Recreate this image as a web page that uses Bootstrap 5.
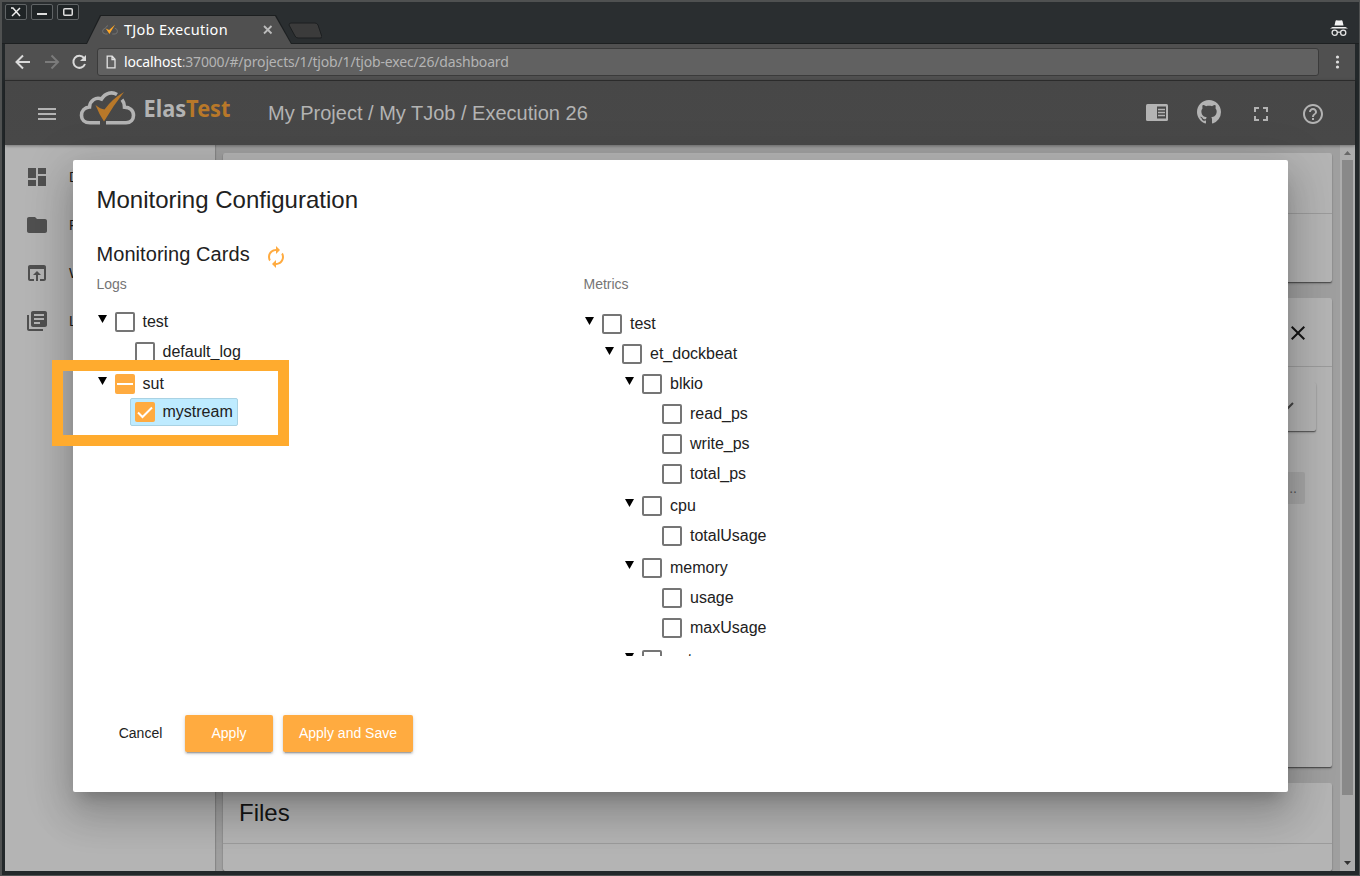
<!DOCTYPE html>
<html lang="en">
<head>
<meta charset="utf-8">
<title>TJob Execution</title>
<link href="https://cdn.jsdelivr.net/npm/bootstrap@5.3.0/dist/css/bootstrap.min.css" rel="stylesheet">
<style>
body{width:1360px;height:876px;background:#4f4f4f;font-family:"Liberation Sans",Arial,sans-serif;color:#212121;line-height:1.2}
svg{display:block;flex:none}
.desk{width:1360px;height:876px;padding:2px 1px 1px 2px;background:#4f5151}
.win{background:#23282a;border-radius:3px 3px 0 0}
.titlebar{height:42px;background:#2a2e30;padding-left:3px;border-bottom:1px solid #1d2021}
.winbtn{width:22px;height:16px;border:1px solid #606466;border-radius:2px;margin:2px 4px 0 0;background:#1f2426}
.wintab{width:206px;height:29px;margin:13px 0 0 3px;background:#1c1f20;clip-path:polygon(0 100%,14px 0,190px 0,100% 100%)}
.wintab-in{width:100%;height:28px;margin-top:1px;background:#505050;clip-path:polygon(1px 100%,15px 0,189px 0,205px 100%);padding-left:16px}
.ubu{font-family:"Noto Sans","Open Sans",sans-serif}
.tabtext{font-size:14.5px;color:#fff;width:124px;letter-spacing:.3px}
.newtab{width:34px;height:17px;margin:20px 0 0 -4px}
.viewport-frame{margin:0 4px 4px 3px}
.toolbar{height:36px;background:#505050}
.omni{height:28px;background:#616161;border:1px solid #3b3b3b;border-radius:3px;width:1222px;font-size:14px;color:#b4b4b4;letter-spacing:-.17px}
.apphead{height:65px;background:linear-gradient(#474747,#484848);border-top:1px solid #2b2b2b;color:#b3b3b3;z-index:2;box-shadow:0 1px 3px rgba(0,0,0,.35)}
.apptitle{font-size:20px}
.side{width:210px;background:#b4b4b4;padding-top:8px;font-size:14px;color:#1b1b1b;box-shadow:1px 0 1px rgba(0,0,0,.15)}
.side-item{height:48px;padding-left:20px;gap:20px}
.mainarea{background:#9f9f9f;padding:8px 8px 0 8px;gap:16px;overflow:hidden}
.panel{background:#b4b4b4;border-radius:2px;box-shadow:0 1px 1px rgba(0,0,0,.45),0 2px 2px rgba(0,0,0,.15)}
.panel-top{border-bottom:1px solid #9b9b9b}
.sbar{width:15px;background:#adadad;padding:0 2px}
.thumb{width:11px;height:635px;background:#898989}
.dlg{left:73px;top:160px;width:1215px;height:632px;z-index:5;background:#fff;border-radius:2px;padding:24px 24px 24px 23.5px;box-shadow:0 11px 15px -7px rgba(0,0,0,.2),0 24px 38px 3px rgba(0,0,0,.14),0 9px 46px 8px rgba(0,0,0,.12)}
.dlg h2{font-size:24px;font-weight:400;line-height:32px;margin:0}
.dlg h3{font-size:20px;font-weight:400;line-height:24px;margin:0;letter-spacing:.06px}
.tree{font-size:16px;line-height:20px;padding-left:.5px}
.colhead{font-size:14px;color:#757575;line-height:17px}
.node{height:30px;display:flex;align-items:center}
.caret{width:18px;height:20px;flex:none}
.caret::before{content:"";display:block;width:9px;height:8px;margin:3px 0 0 1px;background:#000;clip-path:polygon(0 0,100% 0,50% 100%)}
.tick{width:20px;height:20px;border:2px solid #757575;border-radius:2px;margin-right:7.5px;flex:none}
.metrics .tick{margin-right:8px}
.tick.on{background:#ffab40;border:0}
.kids{margin-left:20px}
.kids+.node{margin-top:2px}
.leaf{padding-left:18px}
.picked{width:108px;height:28px;margin:-1px 0 0 13px;padding-left:4px;background:#beebff;border:1px solid #a9d2e3;border-radius:2px}
.act{height:37px;font-size:14px;border-radius:2px;color:#fff;background:#ffab40;border:0;padding:0;box-shadow:0 3px 1px -2px rgba(0,0,0,.2),0 2px 2px rgba(0,0,0,.14),0 1px 5px rgba(0,0,0,.12)}
.act.flat{background:none;box-shadow:none;color:#212121}
.marker{left:52px;top:360px;width:237px;height:86px;border:11.5px solid #ffab2e;z-index:6}
</style>
</head>
<body class="overflow-hidden position-relative">
<div class="desk d-flex flex-column">
 <div class="win d-flex flex-column flex-grow-1">
  <div class="titlebar d-flex">
   <div class="winbtn d-flex align-items-center justify-content-center"><svg width="10" height="10"><path d="M0 1h2l7 8M9 1L1 9" fill="none" stroke="#eee" stroke-width="1.500"/></svg></div>
   <div class="winbtn d-flex align-items-center justify-content-center"><svg width="10" height="10"><path d="M0 7h10" stroke="#ddd" stroke-width="2"/></svg></div>
   <div class="winbtn d-flex align-items-center justify-content-center"><svg width="10" height="8"><rect x=".75" y=".75" width="8.5" height="6.5" rx="1" fill="none" stroke="#ddd" stroke-width="1.500"/></svg></div>
   <div class="wintab"><div class="wintab-in d-flex align-items-center ubu">
    <svg width="16" height="12" viewBox="0 0 56 38"><path d="M20 33H12Q2 32 2 23q1-9 10-10 2-8 9-9M36 33h10q8-1 8-10 0-8-9-10" fill="none" stroke="#777" stroke-width="3"/><path d="M13 14l12 5L46 0 26 33z" fill="#ffa726"/></svg>
    <span class="tabtext text-nowrap" style="margin-left:6px">TJob Execution</span>
    <svg width="10" height="10" style="margin-left:15px"><path d="M1 1l7.500 7.500M8.500 1L1 8.500" stroke="#bbb" stroke-width="1.800"/></svg>
   </div></div>
   <svg class="newtab" viewBox="0 0 34 17"><path d="M3 1h24q2 0 3 2l4 12q0 1-2 1H10q-2 0-3-2L1 3q0-2 2-2z" fill="#3b3b3b" stroke="#1c1f20"/></svg>
   <svg class="ms-auto" width="18" height="18" viewBox="0 0 18 18" style="margin:16px 11px 0 0"><path d="M4.500 7.500L5.500 3q.300-1 1.300-.800 2.200.500 4.400 0 1-.200 1.300.800l1 4.500zM0 10.500L2.500 9h13l2.500 1.500z" fill="#f2f2f2"/><circle cx="4.700" cy="14.700" r="2.600" fill="none" stroke="#e4e4e4" stroke-width="1.300"/><circle cx="13.200" cy="14.700" r="2.600" fill="none" stroke="#e4e4e4" stroke-width="1.300"/><path d="M7 14.200h4" stroke="#e4e4e4" stroke-width="1.200"/></svg>
  </div>
  <div class="viewport-frame d-flex flex-column flex-grow-1">
   <div class="toolbar d-flex align-items-center">
    <svg width="92" height="36" viewBox="0 0 92 36" fill="none" stroke-width="2"><path d="M25 18H12M18 11.500L11.500 18l6.500 6.500" stroke="#dadada"/><path d="M40 18h13M46.500 11.500L53 18l-6.500 6.500" stroke="#7b7b7b"/><path d="M79 14A6 6 0 1 0 80 20" stroke="#dadada"/><path d="M81 11v6h-6z" fill="#dadada"/></svg>
    <div class="omni d-flex align-items-center ubu"><svg width="26" height="26" viewBox="0 0 26 26"><path d="M9.200 7.200h5l2.800 3v8.600H9.200zM14 7.500v3h3" fill="none" stroke="#e3e3e3" stroke-width="1.300"/></svg><span class="text-nowrap"><span style="color:#fff">localhost</span>:37000/#/projects/1/tjob/1/tjob-exec/26/dashboard</span></div>
    <svg width="36" height="36"><g fill="#dedede"><circle cx="18.500" cy="13" r="1.600"/><circle cx="18.500" cy="18" r="1.600"/><circle cx="18.500" cy="23" r="1.600"/></g></svg>
   </div>
   <div class="apphead d-flex align-items-center position-relative">
    <svg width="24" height="24" viewBox="0 0 24 24" fill="#b3b3b3" style="margin:2px 0 0 30px"><path d="M3 18h18v-2H3v2zm0-5h18v-2H3v2zm0-7v2h18V6H3z"/></svg>
    <svg width="154" height="40" viewBox="0 0 154 40" style="margin:-8px 0 0 20px"><path d="M21 33.800H11C5.500 33.800 2.500 30.500 2.500 26.500c0-4.500 3-8 8-8.500C11 11.500 17 7.500 22.500 10c4-6.500 10.500-7.500 15.500-4.500M27 33.800h20c5 0 7.500-3.500 7.500-7.500 0-5-4-8-9-8.200 0-3-.500-5-2.500-7.500" fill="none" stroke="#b3b3b3" stroke-width="3.600"/><path d="M16.500 16q5 4 9 4.500Q33 10 45 3 34 17 25 32.500 20 25 16.500 16z" fill="#b87829"/><text x="64.500" y="28.200" class="ubu" font-size="23.500" font-weight="700" textLength="87" lengthAdjust="spacingAndGlyphs" fill="#b3b3b3">Elas<tspan fill="#b87829">Test</tspan></text></svg>
    <span class="apptitle text-nowrap" style="margin-left:35px">My Project / My TJob / Execution 26</span>
    <div class="d-flex align-items-center ms-auto" style="gap:28px;margin:2px 30px 0 0">
     <svg width="24" height="24" viewBox="0 0 24 24"><rect x="1" y="2" width="22" height="17" rx="1.500" fill="#b3b3b3"/><path d="M12 4.500h9v12h-9z" fill="#474747"/><path d="M13 7.500h7M13 10.500h7M13 13.500h7" stroke="#b3b3b3" stroke-width="1.400"/></svg>
     <svg width="24" height="24" viewBox="0 0 16 16" fill="#b3b3b3" style="margin-top:-4px"><path d="M8 0C3.580 0 0 3.580 0 8c0 3.540 2.290 6.530 5.470 7.590.4.070.55-.17.55-.38 0-.19-.01-.82-.01-1.490-2.010.37-2.530-.49-2.690-.94-.09-.23-.48-.94-.82-1.130-.28-.15-.68-.52-.01-.53.63-.01 1.080.58 1.230.82.720 1.210 1.870.87 2.330.66.070-.52.280-.87.510-1.070-1.780-.2-3.640-.89-3.640-3.950 0-.87.310-1.590.82-2.150-.08-.2-.36-1.020.08-2.120 0 0 .67-.21 2.200.82.640-.18 1.320-.27 2-.27s1.360.09 2 .27c1.530-1.040 2.200-.82 2.200-.82.440 1.100.160 1.920.08 2.120.510.560.820 1.270.820 2.150 0 3.070-1.870 3.750-3.650 3.950.290.250.540.730.540 1.480 0 1.070-.01 1.930-.01 2.200 0 .210.150.460.550.380A8.010 8.010 0 0 0 16 8c0-4.420-3.580-8-8-8z"/></svg>
     <svg width="24" height="24" viewBox="0 0 24 24" fill="#b3b3b3"><path d="M7 14H5v5h5v-2H7v-3zm-2-4h2V7h3V5H5v5zm12 7h-3v2h5v-5h-2v3zM14 5v2h3v3h2V5h-5z"/></svg>
     <svg width="24" height="24" viewBox="0 0 24 24" fill="#b3b3b3"><path d="M11 18h2v-2h-2v2zm1-16C6.480 2 2 6.480 2 12s4.480 10 10 10 10-4.480 10-10S17.520 2 12 2zm0 18c-4.410 0-8-3.590-8-8s3.590-8 8-8 8 3.590 8 8-3.590 8-8 8zm0-14c-2.210 0-4 1.790-4 4h2c0-1.100.9-2 2-2s2 .9 2 2c0 2-3 1.750-3 5h2c0-2.250 3-2.500 3-5 0-2.210-1.790-4-4-4z"/></svg>
    </div>
   </div>
   <div class="d-flex flex-grow-1" style="height:0">
    <nav class="side flex-shrink-0 position-relative">
     <div class="side-item d-flex align-items-center"><svg width="24" height="24" viewBox="0 0 24 24" fill="#505050"><path d="M3 13h8V3H3v10zm0 8h8v-6H3v6zm10 0h8V11h-8v10zm0-18v6h8V3h-8z"/></svg><span>D</span></div>
     <div class="side-item d-flex align-items-center"><svg width="24" height="24" viewBox="0 0 24 24" fill="#505050"><path d="M10 4H4c-1.100 0-1.990.9-1.990 2L2 18c0 1.100.9 2 2 2h16c1.100 0 2-.9 2-2V8c0-1.100-.9-2-2-2h-8l-2-2z"/></svg><span>P</span></div>
     <div class="side-item d-flex align-items-center"><svg width="24" height="24" viewBox="0 0 24 24" fill="#505050"><path d="M19 4H5c-1.110 0-2 .9-2 2v12c0 1.100.89 2 2 2h4v-2H5V8h14v10h-4v2h4c1.100 0 2-.9 2-2V6c0-1.100-.89-2-2-2zm-7 6l-4 4h3v6h2v-6h3l-4-4z"/></svg><span>W</span></div>
     <div class="side-item d-flex align-items-center"><svg width="24" height="24" viewBox="0 0 24 24" fill="#505050"><path d="M4 6H2v14c0 1.100.9 2 2 2h14v-2H4V6zm16-4H8c-1.100 0-2 .9-2 2v12c0 1.100.9 2 2 2h12c1.100 0 2-.9 2-2V4c0-1.100-.9-2-2-2zm-1 9H9V9h10v2zm-4 4H9v-2h6v2zm4-8H9V5h10v2z"/></svg><span>L</span></div>
    </nav>
    <main class="mainarea d-flex flex-column flex-grow-1">
     <section class="panel flex-shrink-0" style="height:129px"><div class="panel-top" style="height:61px"></div></section>
     <section class="panel flex-shrink-0" style="height:469px">
      <div class="panel-top d-flex align-items-center justify-content-end" style="height:69px;padding:2px 22px 0 0"><svg width="24" height="24" viewBox="0 0 24 24" fill="#151515"><path d="M19 6.410L17.590 5 12 10.590 6.410 5 5 6.410 10.590 12 5 17.590 6.410 19 12 13.410 17.590 19 19 17.590 13.410 12z"/></svg></div>
      <div class="panel d-flex align-items-center justify-content-end" style="height:49px;margin:15px 16px 0;padding-right:22px"><svg width="16" height="12"><path d="M1 2l7 7 7-7" fill="none" stroke="#444" stroke-width="2"/></svg></div>
      <div class="d-flex align-items-center justify-content-end" style="height:32px;margin:41px 27px 0;padding-right:8px;background:#a6a6a6;border-radius:2px;font-size:14px;color:#555">..</div>
     </section>
     <section class="panel flex-grow-1"><div class="panel-top d-flex align-items-center" style="height:61px;padding-left:16px;font-size:24px;color:#151515">Files</div></section>
    </main>
    <div class="sbar d-flex flex-column flex-shrink-0">
     <svg width="11" height="15"><path d="M2 10l3.500-4L9 10z" fill="#686868"/></svg>
     <div class="thumb"></div>
     <svg class="mt-auto" width="11" height="17"><path d="M2 7l3.500 4L9 7z" fill="#333"/></svg>
    </div>
   </div>
  </div>
 </div>
</div>

<div class="dlg position-absolute d-flex flex-column">
 <h2>Monitoring Configuration</h2>
 <div class="d-flex align-items-center" style="margin-top:23px"><h3>Monitoring Cards</h3><svg width="24" height="24" viewBox="0 0 24 24" fill="#ffab40" style="margin:6px 0 0 14px"><path d="M12 6v3l4-4-4-4v3c-4.420 0-8 3.580-8 8 0 1.570.46 3.030 1.240 4.260L6.700 14.800c-.45-.83-.7-1.790-.7-2.800 0-3.310 2.690-6 6-6zm6.760 1.740L17.300 9.200c.44.840.7 1.790.7 2.800 0 3.310-2.690 6-6 6v-3l-4 4 4 4v-3c4.420 0 8-3.580 8-8 0-1.570-.46-3.030-1.240-4.260z"/></svg></div>
 <div class="d-flex overflow-hidden flex-shrink-0" style="height:380px;margin-top:7px">
  <div style="width:487px">
   <div class="colhead">Logs</div>
   <div class="tree" style="margin-top:14px">
    <div class="node"><span class="caret"></span><span class="tick"></span>test</div>
    <div class="kids"><div class="node leaf"><span class="tick"></span>default_log</div></div>
    <div class="node"><span class="caret"></span><span class="tick on"><svg width="20" height="20"><path d="M2 10h16" stroke="#fff" stroke-width="2"/></svg></span>sut</div>
    <div class="kids"><div class="node picked"><span class="tick on"><svg width="20" height="20"><path d="M3 10.500l4.500 4.500L17 5.500" fill="none" stroke="#fff" stroke-width="2"/></svg></span>mystream</div></div>
   </div>
  </div>
  <div class="metrics" style="width:480px">
   <div class="colhead">Metrics</div>
   <div class="tree" style="margin-top:16px">
    <div class="node"><span class="caret"></span><span class="tick"></span>test</div>
    <div class="kids">
     <div class="node"><span class="caret"></span><span class="tick"></span>et_dockbeat</div>
     <div class="kids">
      <div class="node"><span class="caret"></span><span class="tick"></span>blkio</div>
      <div class="kids">
       <div class="node leaf"><span class="tick"></span>read_ps</div>
       <div class="node leaf"><span class="tick"></span>write_ps</div>
       <div class="node leaf"><span class="tick"></span>total_ps</div>
      </div>
      <div class="node"><span class="caret"></span><span class="tick"></span>cpu</div>
      <div class="kids"><div class="node leaf"><span class="tick"></span>totalUsage</div></div>
      <div class="node"><span class="caret"></span><span class="tick"></span>memory</div>
      <div class="kids">
       <div class="node leaf"><span class="tick"></span>usage</div>
       <div class="node leaf"><span class="tick"></span>maxUsage</div>
      </div>
      <div class="node"><span class="caret"></span><span class="tick"></span>net</div>
     </div>
    </div>
   </div>
  </div>
 </div>
 <div class="d-flex" style="margin:59px 0 0 .5px;gap:10px">
  <button class="btn act flat" style="width:77px;margin-left:5px">Cancel</button>
  <button class="btn act" style="width:88px;margin-left:-4px">Apply</button>
  <button class="btn act" style="width:130px">Apply and Save</button>
 </div>
</div>
<div class="marker position-absolute"></div>
<script src="https://cdn.jsdelivr.net/npm/bootstrap@5.3.0/dist/js/bootstrap.bundle.min.js"></script>
</body>
</html>
